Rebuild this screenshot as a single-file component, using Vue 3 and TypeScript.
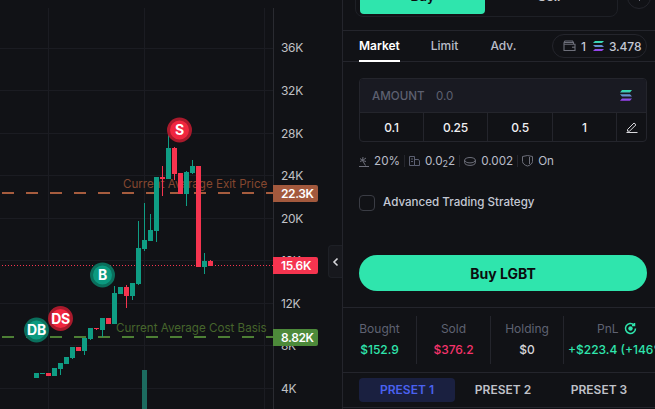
<script setup lang="ts">
interface Candle { x: number; top: number; bottom: number; wickTop: number; wickBottom: number; up: boolean }
const c = (x: number, top: number, bottom: number, up: boolean, wickTop = top, wickBottom = bottom): Candle =>
  ({ x, top, bottom, wickTop, wickBottom, up })
const candles: Candle[] = [
  c(34, 373, 378, true), c(40, 373, 374, true), c(46, 373, 376, false), c(52, 368, 376, true),
  c(58, 363, 369, true, 363, 375), c(64, 357, 364, true), c(70, 347, 358, true, 347, 359), c(76, 347, 351, false),
  c(82, 338, 351, true, 338, 355), c(88, 328, 339, true, 328, 340), c(94, 328, 329, false, 328, 330),
  c(100, 318, 330, true, 318, 337), c(106, 318, 324, false), c(112, 293, 324, true, 286, 324),
  c(118, 287, 294, true), c(124, 287, 296, false, 285, 308), c(130, 283, 296, true, 283, 300),
  c(136, 248, 284, true, 221, 285), c(142, 240, 249, true, 203, 251), c(148, 230, 241, true, 214, 241),
  c(154, 177, 231, true, 177, 242), c(160, 177, 179, false, 166, 196), c(166, 148, 179, true, 130, 179),
  c(172, 148, 174, false, 147, 180), c(178, 173, 194, false), c(184, 172, 194, true, 171, 206),
  c(190, 166, 173, true, 160, 174), c(196, 166, 267, false), c(202, 261, 267, true, 253, 274),
  c(208, 261, 266, false, 260, 266)
]
const gridY = [48, 90, 133, 175, 218, 260, 303, 345, 388]
const gridX = [48, 144, 264]
const axis = [
  { t: '36K', y: 47 }, { t: '32K', y: 90 }, { t: '28K', y: 133 }, { t: '24K', y: 175 },
  { t: '20K', y: 218 }, { t: '16K', y: 260 }, { t: '12K', y: 303 }, { t: '8K', y: 345 }, { t: '4K', y: 388 }
]
const markers = [
  { t: 'DB', x: 36.5, y: 330, kind: 'g' }, { t: 'DS', x: 60.5, y: 318.5, kind: 'r' },
  { t: 'B', x: 102.5, y: 275, kind: 'g' }, { t: 'S', x: 179.5, y: 130, kind: 'r' }
]
const tags = [
  { t: '22.3K', y: 185, fill: '#a3593d' }, { t: '15.6K', y: 257, fill: '#f5344f' }, { t: '8.82K', y: 329, fill: '#4d8a3a' }
]
const amounts = ['0.1', '0.25', '0.5', '1']
</script>

<template>
  <div class="page">
    <section class="chart">
      <svg class="plot" width="342" height="409" viewBox="0 0 342 409">
        <line v-for="y in gridY" :key="'h' + y" x1="0" x2="273" :y1="y + 0.5" :y2="y + 0.5" stroke="#1b1c22" />
        <line v-for="x in gridX" :key="'v' + x" :x1="x + 0.5" :x2="x + 0.5" y1="8" y2="409" stroke="#1b1c22" />
        <line x1="273.5" x2="273.5" y1="8" y2="409" stroke="#2a2b31" />
        <rect x="142" y="370" width="5" height="39" fill="#1c6b5f" />
        <text x="123" y="187.5" class="ltext" fill="#84472f">Current Average Exit Price</text>
        <text x="116" y="331.5" class="ltext" fill="#46652c">Current Average Cost Basis</text>
        <line x1="2" x2="273" y1="193" y2="193" stroke="#a65c3e" stroke-width="2" stroke-dasharray="12 12" />
        <line x1="2" x2="273" y1="337" y2="337" stroke="#4d7f35" stroke-width="2" stroke-dasharray="12 12" />
        <line x1="2" x2="273" y1="265.5" y2="265.5" stroke="#f5344f" stroke-dasharray="1 2" />
        <g v-for="k in candles" :key="k.x" :fill="k.up ? '#0f9d84' : '#f5344f'">
          <rect :x="k.x + 2" :y="k.wickTop" width="1" :height="k.wickBottom - k.wickTop" />
          <rect :x="k.x" :y="k.top" width="5" :height="k.bottom - k.top" />
        </g>
        <g v-for="m in markers" :key="m.t">
          <circle :cx="m.x" :cy="m.y" r="11" :fill="m.kind === 'g' ? '#0b9a80' : '#f0263f'"
            :stroke="m.kind === 'g' ? '#0a6f5c' : '#a81a2c'" stroke-width="3" />
          <text :x="m.x" :y="m.y + 5" text-anchor="middle" class="mtext">{{ m.t }}</text>
        </g>
        <text v-for="a in axis" :key="a.t" x="281" :y="a.y + 4.5" class="atext">{{ a.t }}</text>
        <g v-for="g in tags" :key="g.t">
          <path :d="`M273 ${g.y}h43a2 2 0 0 1 2 2v13a2 2 0 0 1-2 2h-43z`" :fill="g.fill" />
          <text x="281" :y="g.y + 12.8" class="ttext">{{ g.t }}</text>
        </g>
      </svg>
      <button class="collapse" aria-label="collapse">
        <svg width="8" height="10" viewBox="0 0 8 10"><path d="M5.5 1.5 2 5l3.5 3.5" fill="none" stroke="#d6d6da" stroke-width="1.6" /></svg>
      </button>
    </section>

    <aside class="panel">
      <div class="trade-row">
        <div class="switch">
          <div class="side buy">Buy</div>
          <div class="side sell">Sell</div>
        </div>
        <div class="round"></div>
      </div>

      <nav class="tabs">
        <span class="tab active">Market</span>
        <span class="tab limit">Limit</span>
        <span class="tab adv">Adv.</span>
        <div class="pill">
          <svg width="13" height="12" viewBox="0 0 13 12" fill="none" stroke="#6d6f7a" stroke-width="1.1">
            <path d="M1 2.500h9.500v1.600M1 2.500v8h11V4.200H1.200M1 2.500 2 1h7.500l1 1.500" /><path d="M9 7.200h3" />
          </svg>
          <span>1</span>
          <svg class="psol" width="11" height="10" viewBox="0 0 11 10"><defs>
            <linearGradient id="sol1" x1="0" y1="0" x2="0" y2="1"><stop offset="0" stop-color="#2fe5ad" /><stop offset="1" stop-color="#9a3cf0" /></linearGradient>
          </defs><path d="M2 0h9L9 2H0zM0 4h9l2 2H2zM2 8h9L9 10H0z" fill="url(#sol1)" /></svg>
          <span>3.478</span>
        </div>
      </nav>

      <div class="amount-box">
        <div class="amount-head">
          <span class="amount-label">AMOUNT</span>
          <span class="amount-val">0.0</span>
          <svg class="amount-sol" width="12" height="11" viewBox="0 0 12 11"><defs>
            <linearGradient id="sol2" x1="0" y1="0" x2="0" y2="1"><stop offset="0" stop-color="#2fe5ad" /><stop offset="1" stop-color="#9a3cf0" /></linearGradient>
          </defs><path d="M2 0h10L10 2.400H0zM0 4.200h10l2 2.400H2zM2 8.400h10L10 10.800H0z" fill="url(#sol2)" /></svg>
        </div>
        <div class="amount-row">
          <div v-for="a in amounts" :key="a" class="amt">{{ a }}</div>
          <div class="amt edit">
            <svg width="12" height="12" viewBox="0 0 12 12" fill="none" stroke="#d8d8dc" stroke-width="1">
              <path d="M1.500 8.500 8 2l2 1.800-6.500 6.400H1.500zM0.500 11.500h11" />
            </svg>
          </div>
        </div>
      </div>

      <div class="meta">
        <span class="m">
          <svg width="10" height="11" viewBox="0 0 10 11" fill="none" stroke="#6d6f7a"><path d="M0 10.500h10M6.500 9.500 3.500 4.500 1 5.500M3.500 4.500 1 2.500M3.500 4.500 4 1M3.500 4.500 7 2M3.500 4.500 7 5.500" /></svg>
          20%
        </span>
        <i class="sep"></i>
        <span class="m">
          <svg width="11" height="10" viewBox="0 0 11 10" fill="none" stroke="#5c6072"><path d="M.5.500h5v9h-5zM5.500 3.500h4l1 1.500v4.500h-5M2 3h2M2 5.500h2" /></svg>
          <span>0.0<sub>2</sub>2</span>
        </span>
        <i class="sep"></i>
        <span class="m">
          <svg width="12" height="9" viewBox="0 0 12 9" fill="none" stroke="#6d6f7a"><ellipse cx="6" cy="3.200" rx="5.400" ry="2.700" /><path d="M.6 3.200v2.500c0 1.500 2.400 2.700 5.400 2.700s5.400-1.200 5.400-2.700V3.200" /></svg>
          0.002
        </span>
        <i class="sep"></i>
        <span class="m">
          <svg width="11" height="12" viewBox="0 0 11 12" fill="none" stroke="#6d6f7a"><path d="M.5 1.500 5.500.5l5 1v5c0 2-2.500 4-5 4.500-2.500-.5-5-2.500-5-4.500zM7.500 2v7" /></svg>
          On
        </span>
      </div>

      <label class="strategy">
        <span class="check"></span>
        <span class="strategy-text">Advanced Trading Strategy</span>
      </label>

      <button class="buy-btn">Buy LGBT</button>

      <div class="stats">
        <div class="stat s1"><span class="st">Bought</span><b class="green">$152.9</b></div>
        <div class="stat s2"><span class="st">Sold</span><b class="red">$376.2</b></div>
        <div class="stat s3"><span class="st">Holding</span><b class="white">$0</b></div>
        <div class="stat s4">
          <span class="st">PnL
            <svg width="13" height="13" viewBox="0 0 13 13" fill="none" stroke="#2fe5ad" stroke-width="1.500"><path d="M11.500 6.500a5 5 0 1 1-1.500-3.600M10.500 1v2.400H8" /><circle cx="6.500" cy="6.500" r="2.200" fill="#2fe5ad" stroke="none" /></svg>
          </span>
          <b class="green nowrap">+$223.4 (+146%)</b>
        </div>
      </div>

      <div class="presets">
        <div class="preset on">PRESET 1</div>
        <div class="preset">PRESET 2</div>
        <div class="preset">PRESET 3</div>
      </div>
    </aside>
  </div>
</template>

<style>
html, body { margin: 0; background: #111216; }
</style>

<style scoped>
.page {
  width: 655px; height: 409px; display: flex; overflow: hidden; background: #111216;
  font-family: Inter, "Liberation Sans", sans-serif; color: #d6d6da;
}
.chart { position: relative; width: 342px; height: 409px; flex: none; }
.plot { display: block; }
.ltext { font-size: 11.6px; }
.mtext { font-size: 14px; font-weight: 700; fill: #fff; letter-spacing: -0.3px; }
.atext { font-size: 12px; fill: #c0c1c5; letter-spacing: -0.3px; }
.ttext { font-size: 12px; font-weight: 600; fill: #fff; letter-spacing: -0.4px; }
.collapse {
  position: absolute; left: 328px; top: 245px; width: 14px; height: 33px; padding: 0;
  display: flex; align-items: center; justify-content: center; border: 1px solid #1e2026; border-right: 0;
  border-radius: 4px 0 0 4px; background: #17181d;
}
.panel { width: 313px; height: 409px; flex: none; box-sizing: border-box; border-left: 1px solid #24252c; overflow: hidden; display: flex; flex-direction: column; }
.trade-row { height: 31px; box-sizing: border-box; border-bottom: 1px solid #24252c; display: flex; gap: 9px; padding-left: 12px; align-items: flex-end; overflow: hidden; flex: none; }
.switch { width: 263px; height: 42px; margin-bottom: 13px; box-sizing: border-box; border: 1px solid #1e2026; border-radius: 8px; padding: 2px 4px; display: flex; flex: none; }
.side { font-size: 13px; font-weight: 600; display: flex; align-items: center; justify-content: center; }
.buy { width: 125px; background: #2fe5ad; border-radius: 4px; color: #0b0c0f; }
.sell { flex: 1; color: #c4c5c9; }
.round { width: 24px; height: 24px; flex: none; border: 1px solid #24252c; border-radius: 50%; margin-bottom: 21px; box-sizing: border-box; position: relative; }
.round::after { content: ""; position: absolute; left: 11px; bottom: 7px; width: 1px; height: 3px; background: #6d6f7a; }
.tabs { height: 31px; box-sizing: border-box; border-bottom: 1px solid #24252c; display: flex; align-items: center; padding: 0 0 2px 16px; flex: none; font-size: 12px; font-weight: 600; }
.tab { color: #b9bcc8; }
.active { color: #fff; position: relative; }
.active::after { content: ""; position: absolute; left: 0; right: 0; top: 22px; height: 2px; background: #fff; }
.limit { margin-left: 31px; font-weight: 500; }
.adv { margin-left: 32px; font-weight: 500; }
.pill { margin: 2px 8px 0 auto; height: 24px; box-sizing: border-box; width: 95px; border: 1px solid #24252c; border-radius: 12px; display: flex; align-items: center; gap: 5px; padding-left: 10px; font-weight: 500; color: #c4c8d4; font-size: 12px; letter-spacing: -0.1px; }
.psol { margin-left: 2px; }
.amount-box { margin: 16px 8px 0 16px; height: 64px; box-sizing: border-box; border: 1px solid #24252c; border-radius: 4px; flex: none; overflow: hidden; }
.amount-head { height: 34px; box-sizing: border-box; background: #191a22; border-bottom: 1px solid #24252c; display: flex; align-items: center; font-size: 11.6px; padding: 0 14px 0 12px; color: #5d6070; }
.amount-label { font-weight: 500; width: 64px; }
.amount-sol { margin-left: auto; }
.amount-row { display: grid; grid-template-columns: 64px 64px 65px 64px 1fr; height: 28px; }
.amt { display: flex; align-items: center; justify-content: center; border-right: 1px solid #24252c; font-size: 12px; font-weight: 500; color: #f0f0f2; letter-spacing: -0.2px; }
.edit { border-right: 0; }
.meta { margin: 11px 0 0 16px; display: flex; align-items: center; height: 16px; font-size: 11.7px; color: #b9bcc8; flex: none; }
.m { display: inline-flex; align-items: center; gap: 5px; white-space: nowrap; }
.m sub { font-size: 9px; line-height: 0; vertical-align: -2px; }
.sep { width: 1px; height: 12px; background: #24252c; margin: 0 4px; }
.strategy { margin: 26px 0 0 16px; display: flex; align-items: center; gap: 8px; font-size: 11.6px; font-weight: 500; color: #c4c8d4; height: 16px; flex: none; }
.strategy-text { padding-bottom: 2px; }
.check { width: 16px; height: 16px; box-sizing: border-box; border: 1px solid #3a3c44; border-radius: 4px; }
.buy-btn { margin: 44px 8px 0 16px; height: 36px; width: 288px; flex: none; border: 0; border-radius: 18px; background: #2fe5ad; color: #0b0c0f; font: 700 14px Inter, "Liberation Sans", sans-serif; }
.stats { margin-top: 16px; height: 66px; box-sizing: border-box; border-top: 1px solid #24252c; border-bottom: 1px solid #24252c; display: grid; grid-template-columns: 73px 74px 73px 1fr; padding: 8px 0; flex: none; }
.stat { display: flex; flex-direction: column; align-items: center; justify-content: flex-start; padding-top: 5px; gap: 6px; font-size: 12px; border-left: 1px solid #24252c; }
.s1 { border-left: 0; }
.s4 { padding-right: 7px; }
.st { color: #5f6272; display: inline-flex; align-items: center; gap: 5px; height: 15px; }
.stat b { font-weight: 500; }
.green { color: #2fe5ad; }
.red { color: #f5336b; }
.white { color: #d6d6da; }
.nowrap { white-space: nowrap; align-self: flex-start; margin-left: 4px; }
.presets { height: 35px; box-sizing: border-box; border-bottom: 1px solid #24252c; padding: 5px 0 5px 16px; display: grid; grid-template-columns: 96px 96px 96px; flex: none; }
.preset { display: flex; align-items: center; justify-content: center; font-size: 12px; font-weight: 600; color: #c0c2c9; border-radius: 4px; height: 24px; box-sizing: border-box; padding-bottom: 2px; }
.on { background: #1a2040; color: #4a62f0; }
</style>
